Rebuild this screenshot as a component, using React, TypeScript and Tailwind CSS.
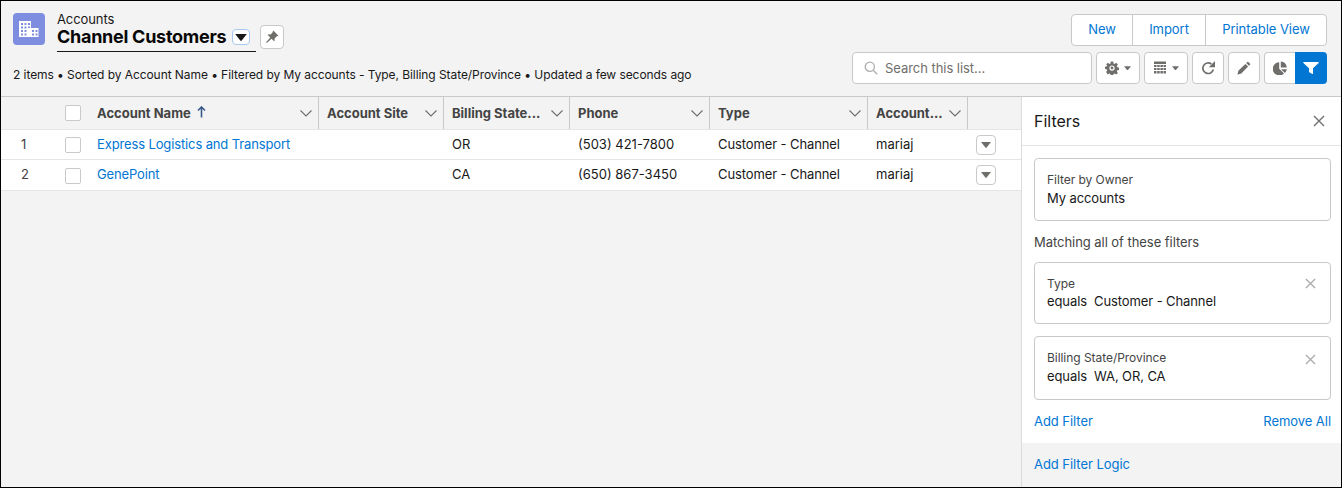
import React from "react";

const Chevron = ({ className = "" }: { className?: string }) => (
  <svg width="14" height="14" viewBox="0 0 14 14" className={className} fill="none" stroke="#706e6b" strokeWidth="1.1">
    <path d="M1.5 4.5 7 10l5.5-5.500" />
  </svg>
);

const X = ({ size, color, w = 1.5 }: { size: number; color: string; w?: number }) => (
  <svg width={size} height={size} viewBox="0 0 12 12" fill="none" stroke={color} strokeWidth={w}>
    <path d="M1 1l10 10M11 1 1 11" />
  </svg>
);

const Caret = ({ w = 5, color = "#706e6b" }: { w?: number; color?: string }) => (
  <svg width={w * 2} height={w + 1} viewBox="0 0 10 6"><path d="M0 0h10L5.600 5.600a.8.8 0 0 1-1.200 0z" fill={color} /></svg>
);

const Check = () => <span className="block w-[16px] h-[16px] bg-white border border-[#c9c9c9] rounded-[2px]" />;

const cols = [
  { w: "w-[222px]", label: "Account Name", sort: true },
  { w: "w-[125px]", label: "Account Site" },
  { w: "w-[126px]", label: "Billing State..." },
  { w: "w-[140px]", label: "Phone" },
  { w: "w-[158px]", label: "Type" },
  { w: "w-[100px]", label: "Account..." },
];

const rows = [
  { n: "1", name: "Express Logistics and Transport", st: "OR", ph: "(503) 421-7800", chk: "mt-[2px]" },
  { n: "2", name: "GenePoint", st: "CA", ph: "(650) 867-3450", chk: "mt-[3px]" },
];

const IconBtn = ({ children, cls }: { children: React.ReactNode; cls: string }) => (
  <div className={`h-[32px] bg-white border border-[#c9c9c9] rounded-[4px] flex items-center justify-center ${cls}`}>{children}</div>
);

const FilterCard = ({ label, value, h, close, gap = "leading-[18px]" }: { label: string; value: string; h: string; close?: string; gap?: string }) => (
  <div className={`relative ml-3 mr-[10px] border border-[#c9c9c9] rounded-[4px] px-3 pt-[12px] ${h}`}>
    <div className={`text-[12px] text-[#444444] tracking-[-0.05px] ${gap}`}>{label}</div>
    <div className="text-[13px] leading-[19px] text-[#181818] tracking-[-0.1px] whitespace-pre">{value}</div>
    {close && (
      <span className={`absolute right-[14px] ${close}`}><X size={11} color="#aeaeae" /></span>
    )}
  </div>
);

export default function App() {
  return (
    <div className="w-[1342px] h-[488px] border border-black bg-[#f3f3f3] overflow-hidden flex flex-col text-[13px] text-[#181818] font-['Inter','Liberation_Sans',sans-serif]">
      <div className="h-[96px] shrink-0 border-b border-[#c9c9c9] flex justify-between pl-3 pr-[14px] pt-3">
        <div>
          <div className="flex items-start">
            <div className="w-[32px] h-[32px] rounded-[4px] bg-[#7f8de1] flex items-center justify-center">
              <svg width="20" height="20" viewBox="0 0 20 20" fill="white">
                <path fillRule="evenodd" d="M0 2h12v16H0zm2 2h2v2H2zm3.500 0h2v2h-2zM9 4h2v2H9zM2 7.500h2v2H2zm3.500 0h2v2h-2zm0 3.500h2v2h-2zM2 11h2v2H2zm0 3.500h2v2H2zm3.500 0h2v2h-2zM9 7.500h2V9H9z" />
                <path fillRule="evenodd" d="M11 9h8.500v9H11zm2 2h2v2h-2zm3.500 0h2v2h-2zm-3.500 3.500h2v2h-2zm3.500 0h2v2h-2z" />
              </svg>
            </div>
            <div className="ml-3 -mt-[1px]">
              <div className="text-[13px] leading-[15px] text-[#181818] tracking-[-0.1px]">Accounts</div>
              <div className="flex items-start -mt-[1px]">
                <div className="w-[199px] h-[22px] border-b border-[#181818] box-content pb-[3px]">
                  <div className="flex items-center h-[22px] w-[200px]">
                    <span className="text-[18px] leading-[22px] font-bold text-[#080707] tracking-[-0.27px] whitespace-nowrap">Channel Customers</span>
                    <span className="ml-[6px] w-[18px] h-[16px] bg-white rounded-[4px] border border-[#a8c8ef] flex items-center justify-center shrink-0"><Caret w={6} color="#181818" /></span>
                  </div>
                </div>
                <div className="ml-[4px] mt-[-1px] w-[24px] h-[24px] bg-white border border-[#c9c9c9] rounded-[4px] flex items-center justify-center">
                  <svg width="14" height="14" viewBox="0 0 14 14" fill="#706e6b">
                    <path d="M8.600.800 13.200 5.400c.3.300 0 .7-.3.700-.5 0-1 0-1.400.400L9.800 8.200c-.3.400-.3.900-.2 1.400.2.800-.1 1.300-.5 1.700L6.500 8.700 2.300 12.500c-.3.300-.9.400-1 .200-.2-.200 0-.700.200-1L5.300 7.500 2.700 4.900c.4-.4.900-.7 1.700-.5.500.100 1 .100 1.400-.200L7.500 2.500c.4-.400.4-.900.400-1.400 0-.300.400-.600.700-.300z" />
                  </svg>
                </div>
              </div>
            </div>
          </div>
          <div className="mt-[14px] text-[12px] leading-[18px] text-[#181818] tracking-[-0.07px] whitespace-nowrap">
            2 items • Sorted by Account Name • Filtered by My accounts - Type, Billing State/Province • Updated a few seconds ago
          </div>
        </div>
        <div className="flex flex-col items-end pt-[1px]">
          <div className="flex h-[32px] bg-white border border-[#c9c9c9] rounded-[4px] text-[13px] text-[#0176d3] tracking-[-0.05px]">
            <div className="w-[61px] flex items-center justify-center border-r border-[#c9c9c9]">New</div>
            <div className="w-[73px] flex items-center justify-center border-r border-[#c9c9c9]">Import</div>
            <div className="w-[120px] flex items-center justify-center">Printable View</div>
          </div>
          <div className="flex mt-[6px] gap-[4px]">
            <div className="w-[240px] h-[32px] bg-white border border-[#c9c9c9] rounded-[4px] flex items-center pl-[11px] text-[13px] text-[#706e6b]">
              <svg width="14" height="14" viewBox="0 0 14 14" fill="none" stroke="#aeaeae" strokeWidth="1.300">
                <circle cx="5.800" cy="5.800" r="4.600" /><path d="m9.200 9.200 4 4" />
              </svg>
              <span className="ml-[7px] pt-[1px] tracking-[-0.05px]">Search this list...</span>
            </div>
            <IconBtn cls="w-[44px] gap-[5px]">
              <svg width="14" height="14" viewBox="0 0 24 24" fill="#706e6b">
                <path fillRule="evenodd" d="M10 1h4l.6 3.200 2 .8 2.700-1.800 2.800 2.800-1.800 2.700.8 2 3 .5v4l-3 .6-.8 2 1.800 2.700-2.800 2.800-2.700-1.800-2 .8-.6 3.200h-4l-.6-3.200-2-.8-2.700 1.800L1.900 19l1.800-2.700-.8-2-2.900-.6v-4l2.900-.6.800-2L1.900 6l2.800-2.800 2.700 1.800 2-.8zM12 7.500a4.500 4.500 0 1 0 0 9 4.500 4.500 0 0 0 0-9z" />
                <circle cx="12" cy="12" r="2.500" />
              </svg>
              <Caret w={3.500} />
            </IconBtn>
            <IconBtn cls="w-[44px] gap-[5px]">
              <svg width="14" height="14" viewBox="0 0 14 14" fill="#706e6b">
                <path d="M1 .500h12V3H1zM1 4h2.500v2H1zm3.200 0h2.500v2H4.200zm3.200 0h2.500v2H7.400zm3.100 0H13v2h-2.500zM1 7h2.500v2H1zm3.200 0h2.500v2H4.200zm3.200 0h2.500v2H7.400zm3.100 0H13v2h-2.500zM1 10h2.500v2.500H1zm3.200 0h2.500v2.500H4.200zm3.200 0h2.500v2.500H7.400zm3.100 0H13v2.500h-2.500z" />
              </svg>
              <Caret w={3.500} />
            </IconBtn>
            <IconBtn cls="w-[32px]">
              <svg width="14" height="14" viewBox="0 0 14 14" fill="none" stroke="#706e6b" strokeWidth="1.700">
                <path d="M10.400 3A5.300 5.300 0 1 0 12.300 8.500" />
                <path d="M14 0v6.200H7.800z" fill="#706e6b" stroke="none" />
              </svg>
            </IconBtn>
            <IconBtn cls="w-[32px]">
              <svg width="14" height="14" viewBox="0 0 14 14" fill="#706e6b">
                <path d="M10.400.900a.6.600 0 0 1 .9 0l1.800 1.800a.6.600 0 0 1 0 .9l-1.200 1.200-2.700-2.700zM8.400 2.900l2.700 2.700-6.800 6.800-3.400 1c-.3.100-.500-.100-.4-.400l1-3.400z" />
              </svg>
            </IconBtn>
            <div className="flex">
              <div className="w-[31px] h-[32px] bg-white border border-r-0 border-[#c9c9c9] rounded-l-[4px] flex items-center justify-center">
                <svg width="14" height="14" viewBox="0 0 14 14" fill="#706e6b">
                  <path d="M6.200 1.200v6.600l4.800 4.700A6.600 6.600 0 1 1 6.200 1.200z" />
                  <path d="M7.800.600a6.600 6.600 0 0 1 6 6H7.800zM8 8.200h5.800a6.400 6.400 0 0 1-1.800 3.800z" />
                </svg>
              </div>
              <div className="w-[32px] h-[32px] bg-[#0176d3] rounded-r-[4px] flex items-center justify-center">
                <svg width="16" height="14" viewBox="0 0 16 14" fill="white">
                  <path d="M.8 1h14.400c.5 0 .7.500.4.900L10 7.200v5.400c0 .4-.4.600-.7.400l-3-1.800c-.2-.1-.3-.3-.3-.5V7.200L.4 1.900C.1 1.500.3 1 .8 1z" />
                </svg>
              </div>
            </div>
          </div>
        </div>
      </div>

      <div className="flex-1 flex min-h-0">
        <div className="flex-1 min-w-0">
          <div className="flex h-[33px] border-b border-[#e5e5e5] text-[13px] font-bold text-[#444444]">
            <div className="w-[96px] shrink-0 flex items-center pl-[64px]"><Check /></div>
            {cols.map((c, i) => (
              <div key={c.label} className={`${c.w} shrink-0 flex items-center justify-between border-r border-[#c9c9c9] ${i === 0 ? "pr-[5px]" : "pl-2 pr-[5px]"}`}>
                <span className="flex items-center whitespace-nowrap pt-[1px]">
                  {c.label}
                  {c.sort && (
                    <svg width="9" height="12" viewBox="0 0 9 12" className="ml-[6px] -mt-[3px]" fill="none" stroke="#3a5a8c" strokeWidth="1.600"><path d="M4.500 11.500V1M1 4.500 4.500 1 8 4.500" /></svg>
                  )}
                </span>
                <Chevron />
              </div>
            ))}
          </div>
          {rows.map((r) => (
            <div key={r.n} className="flex h-[30px] last:h-[31px] bg-white border-b border-[#e5e5e5] text-[13px] leading-[19px] text-[#181818] items-start pt-[5px]">
              <div className="w-[64px] shrink-0 pl-[20px] text-[#444444]">{r.n}</div>
              <div className={`w-[32px] shrink-0 ${r.chk}`}><Check /></div>
              <div className="w-[222px] shrink-0 text-[#0176d3] tracking-[-0.13px]">{r.name}</div>
              <div className="w-[125px] shrink-0" />
              <div className="w-[126px] shrink-0 pl-2">{r.st}</div>
              <div className="w-[140px] shrink-0 pl-2">{r.ph}</div>
              <div className="w-[158px] shrink-0 pl-2 tracking-[-0.1px]">Customer - Channel</div>
              <div className="w-[100px] shrink-0 pl-2">mariaj</div>
              <div className="pl-2">
                <div className="w-[20px] h-[20px] bg-white border border-[#c9c9c9] rounded-[4px] flex items-center justify-center"><Caret w={5} /></div>
              </div>
            </div>
          ))}
        </div>

        <div className="w-[320px] shrink-0 bg-white border-l border-[#dddbda] flex flex-col">
          <div className="h-[49px] shrink-0 border-b border-[#e5e5e5] flex items-center justify-between pl-3 pr-[16px]">
            <span className="text-[16px] text-[#181818]">Filters</span>
            <X size={12} color="#706e6b" w={1.400} />
          </div>
          <div className="mt-3">
            <FilterCard label="Filter by Owner" value="My accounts" h="h-[63px]" />
          </div>
          <div className="mt-3 mx-3 text-[13px] leading-[18px] text-[#444444] tracking-[-0.05px]">Matching all of these filters</div>
          <div className="mt-[11px]">
            <FilterCard label="Type" value="equals  Customer - Channel" h="h-[62px]" gap="leading-[17px]" close="top-[15px]" />
          </div>
          <div className="mt-[12px]">
            <FilterCard label="Billing State/Province" value="equals  WA, OR, CA" h="h-[64px]" close="top-[17px]" />
          </div>
          <div className="ml-3 mr-[10px] mt-[12px] flex justify-between text-[13px] leading-[19px] text-[#0176d3] tracking-[-0.05px]">
            <span>Add Filter</span><span>Remove All</span>
          </div>
          <div className="mt-[12px] flex-1 bg-[#f3f3f3] pl-3 pt-[12px] text-[13px] leading-[19px] text-[#0176d3] tracking-[-0.05px]">Add Filter Logic</div>
        </div>
      </div>
    </div>
  );
}
